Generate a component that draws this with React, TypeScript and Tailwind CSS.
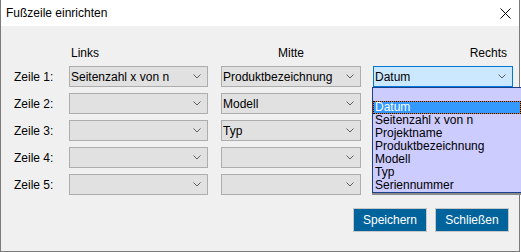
import React from "react";

const rows = [
  { label: "Zeile 1:", left: "Seitenzahl x von n", mid: "Produktbezeichnung" },
  { label: "Zeile 2:", left: "", mid: "Modell" },
  { label: "Zeile 3:", left: "", mid: "Typ" },
  { label: "Zeile 4:", left: "", mid: "" },
  { label: "Zeile 5:", left: "", mid: "" },
];

const options = [
  "Seitenzahl x von n",
  "Projektname",
  "Produktbezeichnung",
  "Modell",
  "Typ",
  "Seriennummer",
];

function Chevron() {
  return (
    <svg width="8" height="5" viewBox="0 0 8 5" className="shrink-0">
      <path d="M0.5 0.5 L4 4 L7.5 0.5" fill="none" stroke="#606060" strokeWidth="1" />
    </svg>
  );
}

function Combo({ value, width, focused }: { value: string; width: string; focused?: boolean }) {
  return (
    <div
      className={`${width} h-[21px] flex items-center justify-between pl-[1px] pr-[6px] border ${
        focused ? "border-[#0078d7] bg-[#cce8ff]" : "border-[#adadad] bg-[#e1e1e1]"
      }`}
    >
      <span className="leading-[14px]">{value}</span>
      <Chevron />
    </div>
  );
}

export default function App() {
  return (
    <div className="relative w-[520px] h-[252px] bg-[#f0f0f0] border-x border-b border-[#7a7a7a] text-[12px] text-black font-['Liberation_Sans',Arial,sans-serif] overflow-visible">
      {/* title bar */}
      <div className="h-[26px] bg-white flex items-center justify-between pl-[5px] pr-[8px]">
        <span className="leading-[16px]">Fußzeile einrichten</span>
        <svg width="11" height="11" viewBox="0 0 11 11">
          <path d="M0.5 0.5 L10.5 10.5 M10.5 0.5 L0.5 10.5" stroke="#000" strokeWidth="1" />
        </svg>
      </div>

      {/* column headers */}
      <div className="flex mt-[19px] leading-[16px]">
        <div className="w-[68px]" />
        <div className="w-[139px] pl-[2px]">Links</div>
        <div className="w-[13px]" />
        <div className="w-[140px] text-center">Mitte</div>
        <div className="w-[12px]" />
        <div className="w-[140px] text-right pr-[6px]">Rechts</div>
      </div>

      {/* rows */}
      <div className="flex flex-col gap-[6px] mt-[5px]">
        {rows.map((r, i) => (
          <div key={i} className="flex items-center">
            <div className="w-[68px] pl-[13px] leading-[14px]">{r.label}</div>
            <Combo value={r.left} width="w-[139px]" />
            <div className="w-[13px]" />
            <Combo value={r.mid} width="w-[140px]" />
            <div className="w-[12px]" />
            {i === 0 ? <Combo value="Datum" width="w-[140px]" focused /> : <div className="w-[140px]" />}
          </div>
        ))}
      </div>

      {/* buttons */}
      <div className="flex justify-end gap-[8px] mt-[13px] pr-[10px]">
        <button className="w-[74px] h-[24px] bg-[#00639c] text-white border border-[#c8c8c8] leading-[14px]">
          Speichern
        </button>
        <button className="w-[74px] h-[24px] bg-[#00639c] text-white border border-[#c8c8c8] leading-[14px]">
          Schließen
        </button>
      </div>

      {/* open dropdown list */}
      <div className="absolute left-[371px] top-[87px] w-[150px] border border-[#1c3f8c] bg-[#ccccff] shadow-[0_2px_0_#8a8a8a] leading-[13px]">
        <div className="h-[13px]" />
        <div className="bg-[#e07a1f]">
          <div className="h-[13px] bg-[#3399ff] bg-clip-padding border border-dotted border-black text-white pl-[1px] leading-[11px]">
            Datum
          </div>
        </div>
        {options.map((o) => (
          <div key={o} className="h-[13px] pl-[2px]">
            {o}
          </div>
        ))}
      </div>
    </div>
  );
}
